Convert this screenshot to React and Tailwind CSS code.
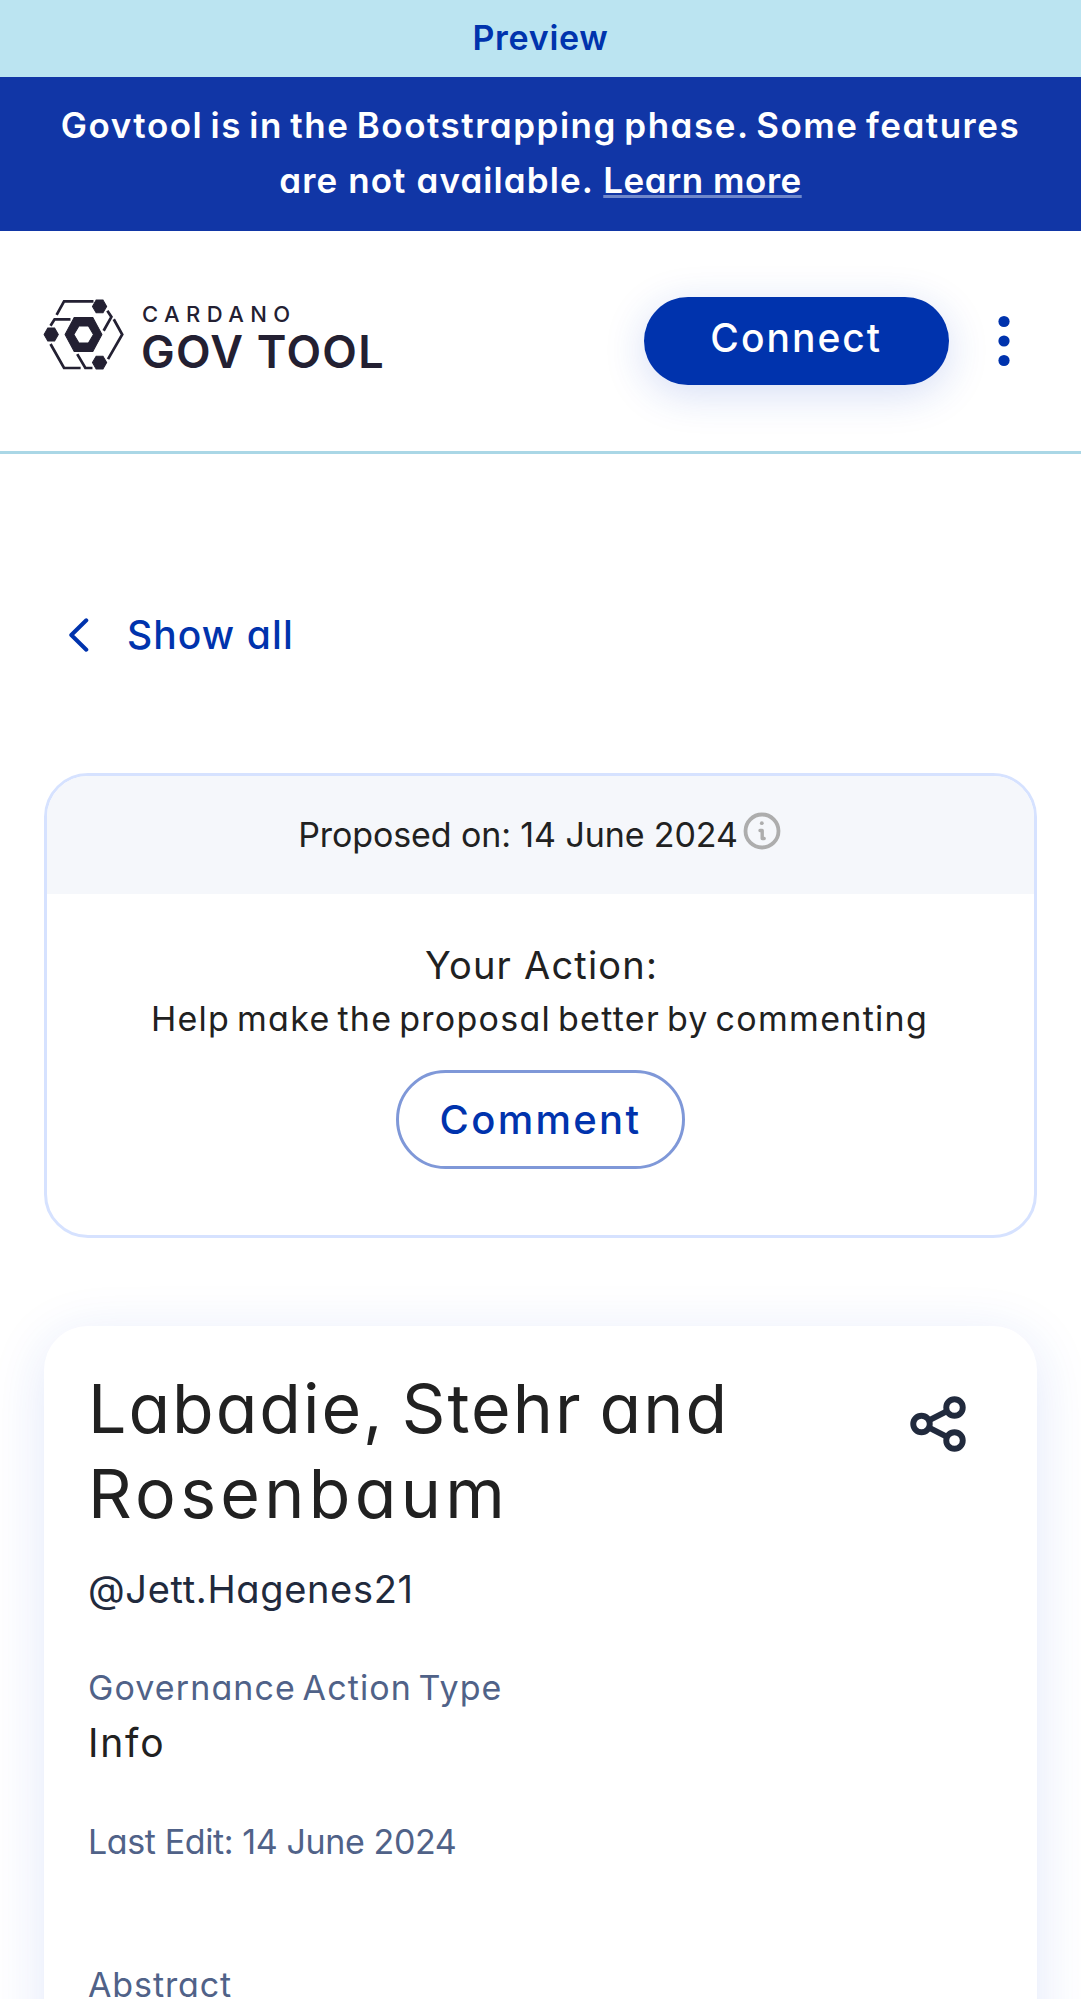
function LogoMark() {
  return (
    <svg viewBox="43 60 233 204" className="h-[69px] w-[79px] overflow-visible" fill="none">
      <g stroke="#232032" strokeWidth="8">
        <path d="M80 104 L102 64 H189" />
        <path d="M230 92 L242 110 L219 151" />
        <path d="M249 117 L274 162 L232 235" />
        <path d="M62 136 L74 117 H121" />
        <path d="M62 190 L102 261 H151" />
        <path d="M141 220 L165 261 H186" />
      </g>
      <g fill="#232032" stroke="#232032" strokeWidth="3">
        <path d="M197 60H217L228 79L217 98H197L186 79Z" />
        <path d="M54 143H74L85 162L74 181H54L43 162Z" />
        <path d="M197 226H217L228 245L217 264H197L186 245Z" />
        <path
          fillRule="evenodd"
          d="M132 112H187L214 162L187 212H132L105 162ZM146 137L131 162L146 187H174L189 162L174 137Z"
        />
      </g>
    </svg>
  );
}

function Banners() {
  return (
    <>
      <div className="flex h-[77px] items-center justify-center bg-[#bbe4f1] pb-[2px] text-[34px] font-semibold tracking-[0.73px] text-[#0033ad]">
        Preview
      </div>
      <div className="h-[154px] bg-[#1136a6] pt-[21px] text-center text-[35px] leading-[55px] font-semibold text-white">
        <p className="tracking-[1.52px] [word-spacing:-3px]">Govtool is in the Bootstrapping phase. Some features</p>
        <p className="tracking-[1.1px]">
          are not available.{" "}
          <a className="tracking-[0.5px] underline decoration-[#7088ca] decoration-[3px] underline-offset-[2px]">
            Learn more
          </a>
        </p>
      </div>
    </>
  );
}

function Header() {
  return (
    <header className="flex h-[223px] items-center justify-between border-b-[3px] border-[#aad7e6] px-[44px]">
      <div className="flex items-center gap-[18px]">
        <div className="pb-[13px]">
          <LogoMark />
        </div>
        <div className="flex flex-col gap-[5px] pb-[6px] text-[#232032]">
          <span className="pl-px text-[22px] leading-[22px] font-medium tracking-[6.4px]">CARDANO</span>
          <span className="text-[45px] leading-[44px] font-semibold tracking-[1.3px]">GOV TOOL</span>
        </div>
      </div>
      <div className="flex items-center gap-[22px]">
        <button className="h-[88px] w-[305.5px] rounded-full bg-[#0033ad] pb-[5px] text-[39px] font-medium tracking-[2px] text-white shadow-[0_9px_41px_rgba(30,70,200,0.18)]">
          Connect
        </button>
        <svg viewBox="0 0 66 66" className="size-[66px]" fill="#0033ad">
          <circle cx="33" cy="13.5" r="5.6" />
          <circle cx="33" cy="33" r="5.6" />
          <circle cx="33" cy="52.5" r="5.6" />
        </svg>
      </div>
    </header>
  );
}

function InfoIcon() {
  return (
    <svg viewBox="0 0 38 38" className="size-[38px]" fill="none" stroke="#adadad">
      <circle cx="19" cy="19" r="16.5" strokeWidth="3.8" />
      <circle cx="18.8" cy="11.2" r="1.9" fill="#adadad" stroke="none" />
      <path d="M17 18.5h2.2v8h2" strokeWidth="3.4" strokeLinecap="round" strokeLinejoin="round" />
    </svg>
  );
}

function ActionCard() {
  return (
    <section className="mt-[108px] h-[465px] overflow-hidden rounded-[44px] border-[3px] border-[#d6e2ff]">
      <div className="flex h-[118px] items-start justify-center gap-[5px] bg-[#f5f7fb] pt-[31px] pr-[2px]">
        <span className="text-[34px] leading-[55px] tracking-[-0.11px]">Proposed on: 14 June 2024</span>
        <div className="pt-[5px]">
          <InfoIcon />
        </div>
      </div>
      <div className="flex flex-col items-center pt-[41px]">
        <p className="pl-[2px] text-[38px] leading-[60px] tracking-[1.19px]">Your Action:</p>
        <p className="pr-[2px] text-[34px] leading-[48px] tracking-[1.29px] [word-spacing:-4px]">
          Help make the proposal better by commenting
        </p>
        <button className="mt-[27px] h-[99px] w-[289px] rounded-full border-[3px] border-[#7f98d8] text-[40px] font-medium tracking-[2.3px] text-[#0033ad]">
          Comment
        </button>
      </div>
    </section>
  );
}

function ShareIcon() {
  return (
    <svg viewBox="0 0 24 24" className="size-[66px]" fill="none" stroke="#212a3d" strokeWidth="2.15">
      <circle cx="18" cy="6" r="3" />
      <circle cx="6" cy="12" r="3" />
      <circle cx="18" cy="18" r="3" />
      <path d="M8.7 10.7 15.3 7.3M8.7 13.3l6.6 3.4" />
    </svg>
  );
}

function ProposalCard() {
  return (
    <section className="mt-[88px] h-[800px] rounded-[44px] bg-white px-[44px] pt-[40px] shadow-[0_11px_55px_rgba(30,80,220,0.13)]">
      <div className="flex justify-between">
        <h1 className="text-[68px] leading-[85px]">
          <span className="block tracking-[2px] [word-spacing:-4px]">Labadie, Stehr and</span>
          <span className="block tracking-[4.3px]">Rosenbaum</span>
        </h1>
        <div className="pt-[25px] pr-[22px]">
          <ShareIcon />
        </div>
      </div>
      <p className="mt-[23px] text-[38px] leading-[60px] tracking-[0.66px] text-[#212a3d]">@Jett.Hagenes21</p>
      <p className="mt-[44px] text-[34px] leading-[50px] tracking-[1.1px] text-[#506288] [word-spacing:-4px]">
        Governance Action Type
      </p>
      <p className="text-[39px] leading-[60px] tracking-[1.8px]">Info</p>
      <p className="mt-[44px] text-[34px] leading-[50px] tracking-[-0.39px] text-[#506288]">Last Edit: 14 June 2024</p>
      <p className="mt-[93px] text-[34px] leading-[50px] tracking-[0.9px] text-[#506288]">Abstract</p>
    </section>
  );
}

export default function App() {
  return (
    <div className="h-[1999px] w-[1081px] overflow-hidden bg-white font-['Inter',sans-serif] text-[#212121] [font-feature-settings:'cv11'] [font-optical-sizing:none]">
      <Banners />
      <Header />
      <main className="px-[44px] pt-[151px]">
        <a className="flex h-[60px] items-center gap-[38px] pl-[25px] text-[39px] font-medium tracking-[1.1px] text-[#0033ad]">
          <svg viewBox="0 0 20 34" className="h-[34px] w-[20px]" fill="none" stroke="#0033ad" strokeWidth="4" strokeLinecap="round" strokeLinejoin="round">
            <path d="M17.3 2.3 2.3 17l15 14.7" />
          </svg>
          Show all
        </a>
        <ActionCard />
        <ProposalCard />
      </main>
    </div>
  );
}
